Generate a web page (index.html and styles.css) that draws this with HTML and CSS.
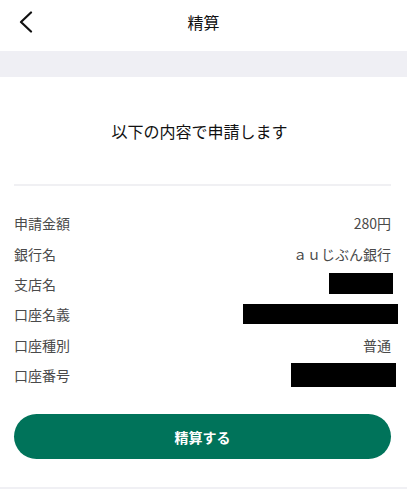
FILE: index.html
```html
<!DOCTYPE html>
<html lang="ja">
<head>
<meta charset="utf-8">
<link rel="stylesheet" href="styles.css">
</head>
<body>
<header class="header">
  <span class="back">
    <svg width="14" height="22" viewBox="0 0 14 22"><path d="M12 1.5 L2 11 L12 20.5" fill="none" stroke="#111" stroke-width="2.2" stroke-linecap="round" stroke-linejoin="round"/></svg>
  </span>
  <h1 class="header-title">精算</h1>
</header>
<div class="band"></div>
<main class="content">
  <section class="intro">
    <p class="intro-text">以下の内容で申請します</p>
  </section>
  <div class="divider"></div>
  <dl class="details">
    <div class="row"><dt>申請金額</dt><dd>280円</dd></div>
    <div class="row"><dt>銀行名</dt><dd>ａｕじぶん銀行</dd></div>
    <div class="row"><dt>支店名</dt><dd><span class="redact redact-branch"></span></dd></div>
    <div class="row"><dt>口座名義</dt><dd><span class="redact redact-name"></span></dd></div>
    <div class="row"><dt>口座種別</dt><dd>普通</dd></div>
    <div class="row"><dt>口座番号</dt><dd><span class="redact redact-number"></span></dd></div>
  </dl>
  <button class="submit" type="button">精算する</button>
</main>
<div class="bottom-band"></div>
</body>
</html>
```
FILE: styles.css
```css
* { box-sizing: border-box; }
html, body { margin: 0; padding: 0; background: #fff; }
body {
  font-family: "Noto Sans CJK JP", "Noto Sans", sans-serif;
  color: #222;
  width: 407px;
  height: 489px;
  overflow: hidden;
  display: flex;
  flex-direction: column;
}
.header {
  height: 51px;
  display: flex;
  align-items: center;
  justify-content: center;
  position: relative;
}
.back {
  position: absolute;
  left: 19px;
  top: 11px;
  width: 14px;
  height: 22px;
  display: block;
}
.back svg { display: block; }
.header-title {
  margin: 0;
  font-size: 16px;
  font-weight: 400;
  line-height: 24px;
  margin-top: -8px;
  color: #111;
}
.band {
  height: 26px;
  background: #efeff4;
}
.content {
  padding: 0 16px 0 14px;
  display: flex;
  flex-direction: column;
}
.intro {
  padding: 42px 6px 41px 0;
  text-align: center;
}
.intro-text {
  margin: 0;
  font-size: 16px;
  line-height: 24px;
  color: #111;
  font-weight: 400;
}
.divider {
  height: 2px;
  background: #f0f0f3;
}
.details {
  margin: 22px 0 0;
  padding: 0;
}
.row {
  height: 30.4px;
  display: flex;
  align-items: center;
  justify-content: space-between;
}
.row dt, .row dd {
  margin: 0;
  font-size: 14px;
  line-height: 20px;
  color: #4a4a4a;
}
.row dd { display: flex; align-items: center; }
.redact { display: block; background: #000; }
.redact-branch { width: 64px; height: 21px; margin-right: -2px; }
.redact-name { width: 155px; height: 20px; margin-right: -7px; }
.redact-number { width: 105px; height: 24px; margin-right: -5px; }
.submit {
  margin-top: 24px;
  height: 45px;
  border: none;
  border-radius: 23px;
  background: #00735a;
  color: #fff;
  font-family: "Noto Sans CJK JP", "Noto Sans", sans-serif;
  font-size: 14px;
  font-weight: 700;
  width: 377px;
}
.bottom-band {
  margin-top: auto;
  height: 2px;
  background: #f0f0f4;
}
```
